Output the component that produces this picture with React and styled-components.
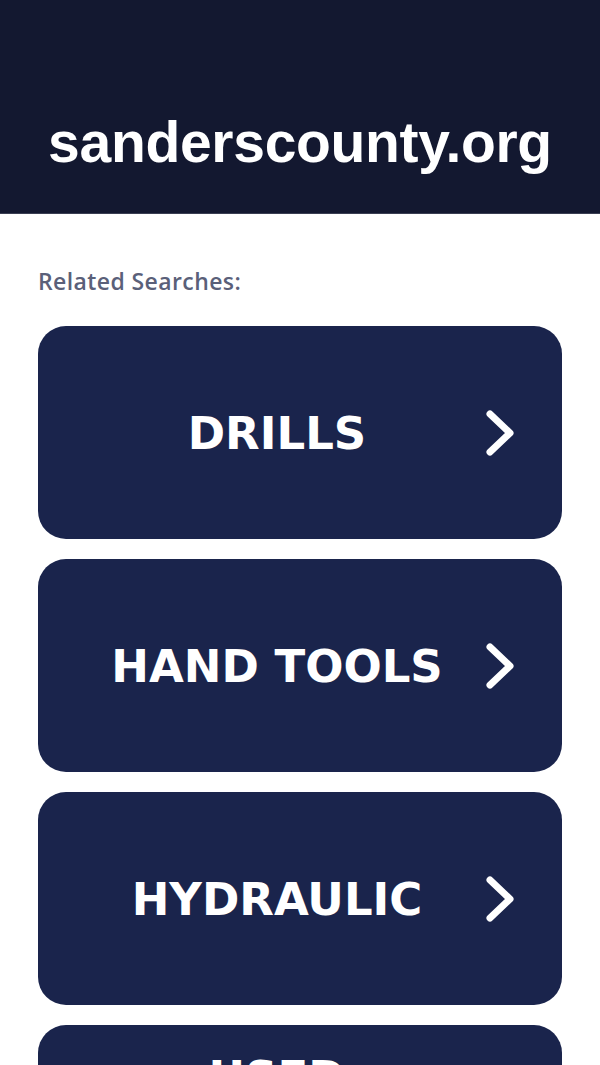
import React from "react";
import styled, { createGlobalStyle } from "styled-components";

const searches = ["DRILLS", "HAND TOOLS", "HYDRAULIC", "USED CONSTRUCTION EQUIPMENT"];

export default function App() {
  return (
    <>
      <GlobalStyle />
      <Header>
        <Domain>sanderscounty.org</Domain>
      </Header>
      <Content>
        <Label>Related Searches:</Label>
        <List>
          {searches.map(s => (
            <Card key={s} href="#">
              <CardText>{s}</CardText>
              <Chevron viewBox="0 0 34 52" width="34" height="52">
                <polyline
                  points="7,7 27,26 7,45"
                  fill="none"
                  stroke="#fff"
                  strokeWidth="7"
                  strokeLinecap="round"
                  strokeLinejoin="round"
                />
              </Chevron>
            </Card>
          ))}
        </List>
      </Content>
    </>
  );
}

const GlobalStyle = createGlobalStyle`
  html, body {
    margin: 0;
    padding: 0;
    background: #fff;
  }
  * {
    box-sizing: border-box;
  }
`;

const Header = styled.header`
  height: 214px;
  padding-top: 108px;
  background: #131830;
  border-bottom: 1px solid #3a3e52;
`;

const Domain = styled.h1`
  margin: 0;
  text-align: center;
  color: #fff;
  font-family: "Liberation Sans", Arial, sans-serif;
  font-weight: bold;
  font-size: 57px;
  line-height: 1.2;
  letter-spacing: -0.3px;
`;

const Content = styled.main`
  padding: 52px 38px 0;
`;

const Label = styled.div`
  font-family: "Open Sans", sans-serif;
  font-weight: 600;
  font-size: 23px;
  line-height: 31px;
  letter-spacing: 0.4px;
  color: #5a6079;
  margin-bottom: 29px;
`;

const List = styled.div`
  display: flex;
  flex-direction: column;
  gap: 20px;
`;

const Card = styled.a`
  position: relative;
  display: flex;
  align-items: center;
  justify-content: center;
  height: 213px;
  padding: 2px 56px 0 10px;
  border-radius: 28px;
  background: #1a244c;
  text-decoration: none;
`;

const CardText = styled.span`
  text-align: center;
  color: #fff;
  font-family: "DejaVu Sans", Verdana, sans-serif;
  font-weight: bold;
  font-size: 45px;
  line-height: 55px;
`;

const Chevron = styled.svg`
  position: absolute;
  right: 45px;
  top: 50%;
  transform: translateY(-50%);
`;
